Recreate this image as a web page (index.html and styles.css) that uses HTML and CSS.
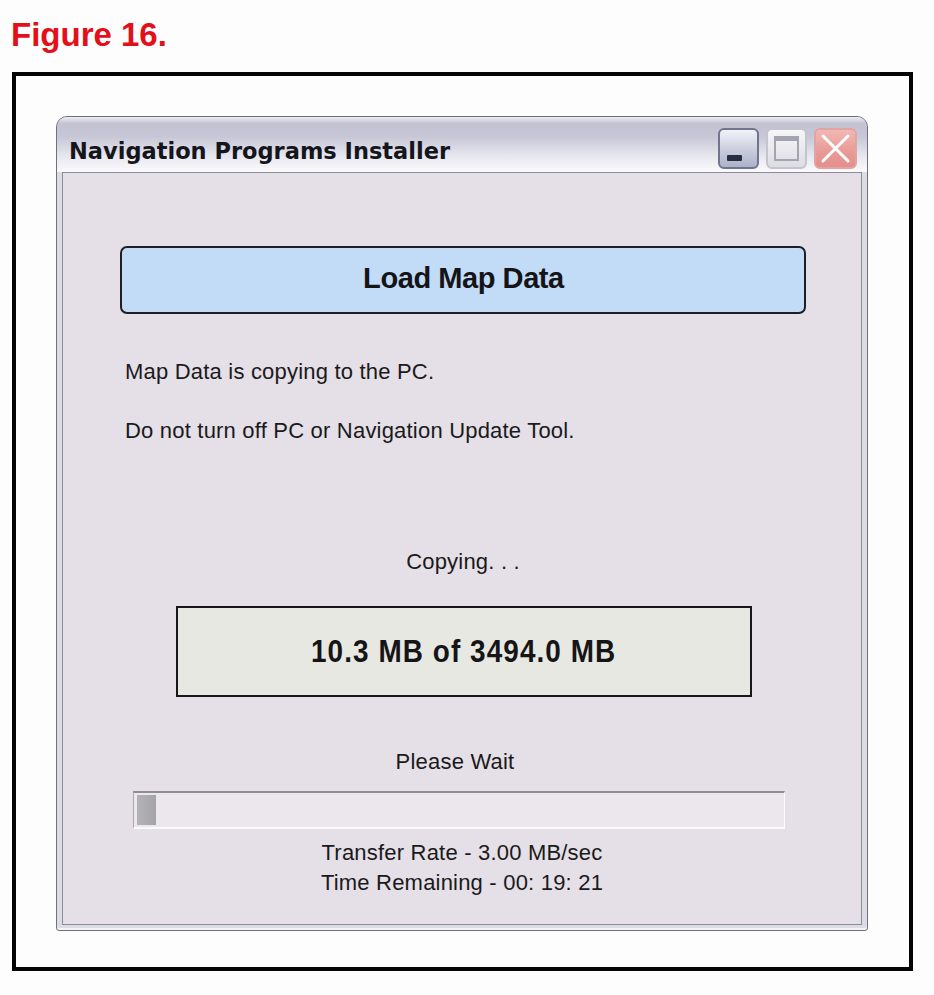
FILE: index.html
```html
<!DOCTYPE html>
<html lang="en">
<head>
    <meta charset="UTF-8">
    <meta name="viewport" content="width=device-width, initial-scale=1.0">
    <title>Figure 16 - Navigation Programs Installer</title>
    <link rel="stylesheet" href="styles.css">
</head>
<body>
    <h1 class="figure-title">Figure 16.</h1>
    <div class="frame">
        <div class="window">
            <div class="titlebar">
                <span class="title">Navigation Programs Installer</span>
                <div class="controls">
                    <span class="ctl ctl-min"><span class="dash"></span></span>
                    <span class="ctl ctl-max">
                        <svg width="27" height="27" viewBox="0 0 27 27">
                            <rect x="2" y="2" width="23" height="23" fill="none" stroke="#a4a4ae" stroke-width="2"/>
                            <rect x="2" y="2" width="23" height="4" fill="#a4a4ae"/>
                        </svg>
                    </span>
                    <span class="ctl ctl-close">
                        <svg width="33" height="33" viewBox="0 0 33 33">
                            <path d="M4 4 L29 29 M29 4 L4 29" stroke="#fff" stroke-width="3" stroke-linecap="round"/>
                        </svg>
                    </span>
                </div>
            </div>
            <div class="content">
                <div class="load-btn"><span class="narrow">Load Map Data</span></div>
                <p class="msg msg-first">Map Data is copying to the PC.</p>
                <p class="msg msg-second">Do not turn off PC or Navigation Update Tool.</p>
                <p class="status status-copy">Copying. . .</p>
                <div class="size-box"><span class="narrow">10.3 MB of 3494.0 MB</span></div>
                <p class="status status-wait">Please Wait</p>
                <div class="progress"><div class="progress-fill"></div></div>
                <div class="rate">
                    <div>Transfer Rate - 3.00 MB/sec</div>
                    <div>Time Remaining - 00: 19: 21</div>
                </div>
            </div>
        </div>
    </div>
</body>
</html>
```

FILE: styles.css
```css
body {
    margin: 0;
    background: #fdfdfd;
    font-family: 'Liberation Sans', Arial, sans-serif;
    color: #1a1a1a;
}
.figure-title {
    margin: 16px 0 0 11px;
    font-size: 33px;
    line-height: 38px;
    font-weight: bold;
    color: #e3101a;
}
.frame {
    box-sizing: border-box;
    width: 901px;
    height: 899px;
    margin: 18px 0 0 12px;
    border: 4px solid #050505;
    background: #fdfdfd;
    padding: 40px 41px 36px 40px;
}
.window {
    box-sizing: border-box;
    height: 815px;
    border: 1px solid #6e707c;
    border-radius: 11px 11px 3px 3px;
    background: #dcdce4;
    display: flex;
    flex-direction: column;
    box-shadow: inset 0 -2px 0 #f4f4f8;
}
.titlebar {
    height: 55px;
    display: flex;
    align-items: flex-start;
    border-radius: 10px 10px 0 0;
    background: linear-gradient(to bottom, #eeeef4 0, #c2c2d2 12%, #c6c6d6 35%, #e6e6ee 70%, #fbfbfd 100%);
    padding: 0 10px 0 12px;
}
.title {
    margin-top: 21px;
    font-family: 'DejaVu Sans', sans-serif;
    font-weight: bold;
    font-size: 22.5px;
    line-height: 26px;
    color: #15151c;
}
.controls {
    margin-left: auto;
    margin-top: 11px;
    display: flex;
    gap: 7px;
}
.ctl {
    box-sizing: border-box;
    width: 41px;
    height: 41px;
    border-radius: 6px;
    display: flex;
    align-items: center;
    justify-content: center;
}
.ctl-min {
    position: relative;
    border: 2px solid #70748c;
    background: linear-gradient(to bottom, #f2f3f8 0, #c9ccdc 55%, #aeb2c8 100%);
}
.ctl-min .dash {
    position: absolute;
    left: 7px;
    top: 25px;
    width: 15px;
    height: 6px;
    border-radius: 1px;
    background: #262c44;
}
.ctl-max {
    border: 2px solid #c4c4ce;
    background: linear-gradient(to bottom, #f6f6f8, #dcdce4);
}
.ctl-close {
    width: 43px;
    border: 2px solid #e0a4a4;
    background: linear-gradient(to bottom, #f2b8b4 0, #e89a96 60%, #e4908c 100%);
}
.content {
    flex: 1;
    margin: 0 5px 5px;
    border: 1px solid #8c8c98;
    background: #e5dfe7;
    display: flex;
    flex-direction: column;
}
.narrow {
    display: inline-block;
    font-weight: bold;
    color: #151518;
}
.load-btn {
    box-sizing: border-box;
    width: 686px;
    height: 68px;
    margin: 73px 0 0 57px;
    border: 2px solid #1e1e24;
    border-radius: 7px;
    background: #c2dcf7;
    text-align: center;
    line-height: 60px;
    font-size: 30px;
}
.load-btn .narrow {
    letter-spacing: -0.5px;
    transform: scaleX(0.97);
}
.msg {
    margin: 0;
    padding-left: 62px;
    font-size: 22px;
    line-height: 26px;
    letter-spacing: 0.2px;
}
.msg-first {
    margin-top: 45px;
}
.msg-second {
    margin-top: 33px;
}
.status {
    margin: 0;
    text-align: center;
    font-size: 22px;
    line-height: 26px;
    letter-spacing: 0.2px;
}
.status-copy {
    margin-top: 105px;
    padding-left: 2px;
}
.size-box {
    box-sizing: border-box;
    width: 576px;
    height: 91px;
    margin: 31px 0 0 113px;
    border: 2px solid #18181a;
    background: #e8e8e3;
    text-align: center;
    line-height: 87px;
    font-size: 31px;
}
.size-box .narrow {
    letter-spacing: 1.2px;
    transform: scaleX(0.9);
}
.status-wait {
    margin-top: 52px;
    padding-right: 14px;
}
.progress {
    box-sizing: border-box;
    width: 652px;
    height: 38px;
    margin: 16px 0 0 70px;
    border-top: 2px solid #8e8e94;
    border-left: 1px solid #a8a8ae;
    border-right: 1px solid #fafafa;
    border-bottom: 2px solid #fafafa;
    background: #ebe7ed;
    padding: 2px 3px;
}
.progress-fill {
    width: 19px;
    height: 100%;
    background: linear-gradient(to right, #b4b4b8, #a4a4a8);
}
.rate {
    margin-top: 9px;
    text-align: center;
    font-size: 22px;
    line-height: 30px;
    letter-spacing: 0.2px;
}
```
